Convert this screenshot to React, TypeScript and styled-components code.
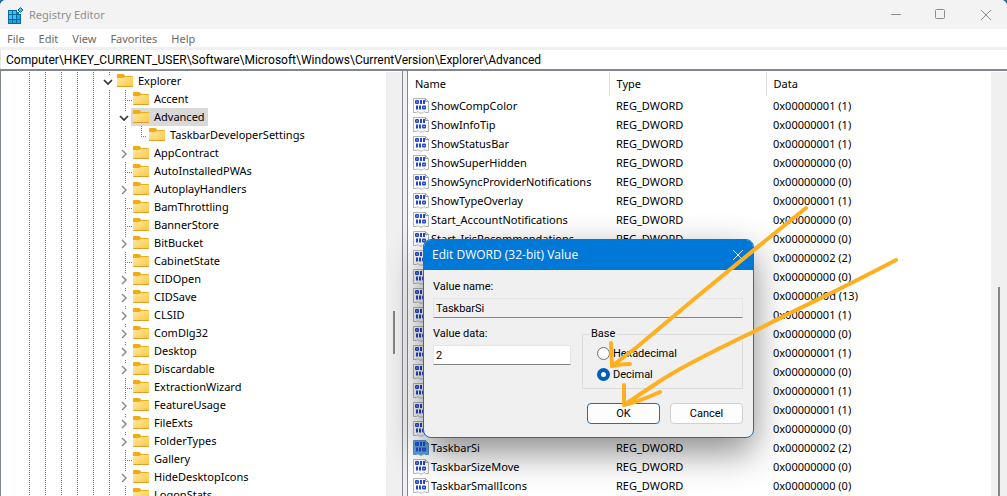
import React, { useState } from 'react';
import styled, { createGlobalStyle, css } from 'styled-components';

const GlobalStyle = createGlobalStyle`
  * { box-sizing: border-box; }
  html, body { margin: 0; padding: 0; background: #2c6a97; }
  body, button, input, table { font-family: "Noto Sans", "Open Sans", sans-serif; font-size: 11px; line-height: 18px; color: #000; }
`;

const line = '#82868f';
const dots = '#7b7b7b';

const Window = styled.main`
  position: relative;
  display: flex;
  flex-direction: column;
  height: 100vh;
  background: #fff;
  border-radius: 6px 6px 0 0;
  overflow: hidden;
`;

const TitleBar = styled.header`
  display: flex;
  align-items: center;
  height: 29px;
  flex: none;
  padding-left: 7px;
  background: #f3f3f3;
`;

const Title = styled.h1`
  flex: 1;
  margin: 0 0 0 4px;
  font-size: 11px;
  font-weight: 400;
  color: #8f8f8f;
`;

const Controls = styled.div`
  display: flex;
  gap: 3px;
`;

const ControlButton = styled.button`
  display: flex;
  align-items: center;
  justify-content: center;
  width: 42px;
  height: 26px;
  padding: 0;
  border: 0;
  background: transparent;
`;

const MenuBar = styled.nav`
  display: flex;
  gap: 14px;
  flex: none;
  height: 18px;
  padding-left: 7px;
`;

const MenuItem = styled.button`
  padding: 0;
  border: 0;
  background: transparent;
  line-height: 20px;
  color: #6a6a6a;
`;

const AddressBar = styled.div`
  flex: none;
  border-top: 3px solid #f0f0f0;
  border-bottom: 2px solid ${line};
`;

const AddressInput = styled.input`
  display: block;
  width: 100%;
  height: 19px;
  padding: 0 5px;
  border: 0;
  border-left: 1px solid #e3e3e3;
  outline: 0;
  background: #fff;
  font-family: Roboto, "Noto Sans", sans-serif;
  font-size: 12px;
`;

const Panes = styled.div`
  display: flex;
  flex: 1;
  min-height: 0;
`;

const TreePane = styled.section`
  display: flex;
  flex: none;
  width: 403px;
  padding-top: 1px;
  border-left: 1px solid ${line};
  border-right: 1px solid ${line};
  overflow: hidden;
`;

const Tree = styled.ul`
  flex: 1;
  margin: 0;
  padding: 0 0 0 20px;
  list-style: none;
`;

const TreeRow = styled.li`
  display: flex;
  height: 18px;
`;

const verticalDots = `repeating-linear-gradient(to bottom, ${dots} 0 1px, transparent 1px 2px)`;
const horizontalDots = `repeating-linear-gradient(to right, ${dots} 0 1px, transparent 1px 2px)`;

const Guide = styled.span<{ $kind: 'line' | 'leaf' | 'last' | 'toggle' }>`
  display: flex;
  align-items: center;
  flex: none;
  width: 16px;
  height: 18px;
  background-repeat: no-repeat;
  ${({ $kind }) =>
    $kind === 'line' &&
    css`background-image: ${verticalDots}; background-size: 1px 18px; background-position: 8px 0;`}
  ${({ $kind }) =>
    $kind === 'leaf' &&
    css`
      background-image: ${verticalDots}, ${horizontalDots};
      background-size: 1px 18px, 6px 1px;
      background-position: 8px 0, 10px 10px;
    `}
  ${({ $kind }) =>
    $kind === 'last' &&
    css`
      background-image: ${verticalDots}, ${horizontalDots};
      background-size: 1px 10px, 6px 1px;
      background-position: 8px 0, 8px 10px;
    `}
  ${({ $kind }) =>
    $kind === 'toggle' &&
    css`background-image: ${verticalDots}; background-size: 1px 3px; background-position: 8px 0;`}
`;

const Toggle = styled.button`
  display: flex;
  align-items: center;
  justify-content: center;
  width: 14px;
  height: 18px;
  padding: 2px 0 0;
  border: 0;
  background: transparent;
`;

const NodeLabel = styled.span<{ $selected?: boolean }>`
  display: flex;
  align-items: center;
  gap: 5px;
  margin-left: -2px;
  padding: 0 3px 0 2px;
  border-radius: 1px;
  background: ${({ $selected }) => ($selected ? '#d9d9d9' : 'transparent')};
  line-height: 18px;
  white-space: nowrap;
`;

const ScrollTrack = styled.div`
  display: flex;
  justify-content: center;
  flex: none;
  width: 16px;
  background: #f0f0f0;
`;

const ScrollThumb = styled.div<{ $top: number; $length?: number }>`
  width: 2px;
  margin-top: ${({ $top }) => $top}px;
  background: #868686;
  ${({ $length }) => ($length ? `height: ${$length}px;` : '')}
`;

const Splitter = styled.div`
  flex: none;
  width: 4px;
  background: #f0f0f0;
`;

const ListPane = styled.section`
  display: flex;
  flex: 1;
  min-width: 0;
  padding-top: 1px;
  border-left: 1px solid ${line};
  overflow: hidden;
`;

const ListScroll = styled.div`
  flex: 1;
  min-width: 0;
`;

const ValueTable = styled.table`
  width: 100%;
  table-layout: fixed;
  border-collapse: collapse;
`;

const HeaderCell = styled.th<{ $width?: number }>`
  height: 24px;
  padding: 0 7px;
  font-weight: 400;
  text-align: left;
  border-right: ${({ $width }) => ($width ? '1px solid #e2e2e2' : '0')};
  ${({ $width }) => ($width ? `width: ${$width}px;` : '')}
`;

const Cell = styled.td`
  height: 19px;
  padding: 0 0 0 7px;
  line-height: 19px;
  white-space: nowrap;
`;

const NameCell = styled(Cell)`
  padding-left: 5px;
`;

const NameContent = styled.span`
  display: flex;
  align-items: center;
  gap: 2px;
  height: 19px;
`;

const Dialog = styled.form`
  position: absolute;
  left: 423px;
  top: 239px;
  width: 331px;
  border: 1px solid #0f74c6;
  border-radius: 8px;
  background: #f0f0f0;
  box-shadow: 0 14px 36px rgba(0, 0, 0, 0.46);
  label, input, legend, button { font-family: Roboto, "Open Sans", sans-serif; font-size: 11px; }
`;

const DialogHeader = styled.div`
  display: flex;
  align-items: center;
  justify-content: space-between;
  height: 30px;
  padding: 0 9px 0 8px;
  border-radius: 7px 7px 0 0;
  background: #0078d7;
  color: #fff;
`;

const DialogTitle = styled.h2`
  margin: 0;
  font-family: "Open Sans", sans-serif;
  font-size: 12px;
  font-weight: 400;
`;

const DialogClose = styled.button`
  display: flex;
  padding: 0;
  border: 0;
  background: transparent;
`;

const DialogBody = styled.div`
  display: flex;
  flex-direction: column;
  padding: 8px 10px 13px 9px;
`;

const FieldLabel = styled.label`
  display: block;
  height: 20px;
`;

const TextField = styled.input`
  display: block;
  width: 100%;
  height: 20px;
  padding: 0 2px;
  border: 1px solid #e5e5e5;
  border-bottom-color: #858585;
  outline: 0;
  background: #fff;
  &:read-only { background: #f0f0f0; }
`;

const DataRow = styled.div`
  display: flex;
  justify-content: space-between;
  margin-top: 7px;
`;

const DataField = styled.div`
  width: 138px;
`;

const BaseGroup = styled.fieldset`
  display: flex;
  flex-direction: column;
  width: 161px;
  height: 64px;
  margin: 0;
  padding: 0 0 0 14px;
  border: 1px solid #dcdcdc;
`;

const Legend = styled.legend`
  margin-left: -8px;
  padding: 0 2px;
`;

const RadioLabel = styled.label`
  display: flex;
  align-items: center;
  gap: 3px;
  height: 21px;
`;

const Radio = styled.input`
  appearance: none;
  width: 13px;
  height: 13px;
  margin: 0;
  border: 1px solid #707070;
  border-radius: 50%;
  background: #fdfdfd;
  &:checked { border: 4px solid #005fb8; background: #fff; }
`;

const Actions = styled.div`
  display: flex;
  justify-content: flex-end;
  gap: 10px;
  margin-top: 14px;
`;

const DialogButton = styled.button<{ $primary?: boolean }>`
  width: 73px;
  height: 21px;
  padding: 0;
  border: 1px solid ${({ $primary }) => ($primary ? '#0f74c6' : '#d0d0d0')};
  border-radius: 4px;
  background: #fdfdfd;
`;

const Annotation = styled.svg`
  position: absolute;
  left: 600px;
  top: 200px;
  pointer-events: none;
`;

const RegistryIcon = () => (
  <svg width="18" height="18" viewBox="0 0 18 18" aria-hidden="true">
    <path d="M1 4h13v14H1z" fill="#0b6a9f" />
    <path d="M2 5h3v3H2zM6 5h3v3H6zM2 9h3v4H2zM6 9h3v4H6z" fill="#3fc3f5" />
    <path d="M2 14h3v3H2zM6 14h3v3H6zM10 9h3v4h-3zM10 14h3v3h-3z" fill="#22a3e0" />
    <path d="M10 2h5v6h-5z" fill="#f3f3f3" />
    <path d="M10 6h2v2h-2z" fill="#1481bd" />
    <path d="M13.500 1.500l2.500 2.500-2.500 2.500-2.500-2.500z" fill="#3fbdf0" stroke="#0b6a9f" />
  </svg>
);

const FolderIcon = () => (
  <svg width="16" height="16" viewBox="0 0 16 16" aria-hidden="true">
    <defs>
      <linearGradient id="folder" x1="0" y1="0" x2="1" y2="1">
        <stop offset="0" stopColor="#ffe9a6" />
        <stop offset="1" stopColor="#fcc73e" />
      </linearGradient>
    </defs>
    <path d="M0 2q0-1 1-1h5q1 0 1.500 1l.5 1h7q1 0 1 1v3H0z" fill="#f3ab14" />
    <path d="M0 5h6l2-1h8v9q0 1-1 1H1q-1 0-1-1z" fill="url(#folder)" />
    <path d="M0 13h16q0 1-1 1H1q-1 0-1-1z" fill="#dfa02a" />
  </svg>
);

const Chevron = ({ open }: { open?: boolean }) => (
  <svg width="10" height="10" viewBox="0 0 10 10" fill="none" aria-hidden="true">
    {open ? (
      <path d="M1 3l4 4 4-4" stroke="#333" strokeWidth="1.700" />
    ) : (
      <path d="M3 1l4 4-4 4" stroke="#8c8c8c" strokeWidth="1.500" />
    )}
  </svg>
);

const BinaryIcon = ({ selected }: { selected?: boolean }) => (
  <svg width="16" height="17" viewBox="0 0 16 17" aria-hidden="true">
    <path
      d="M.5 1.500h12l3 3v11h-3l-1.500-1-1.500 1.500h-3L5 14.500l-1.500 1H.5z"
      fill={selected ? '#5ba3d9' : '#fcfcfc'}
      stroke={selected ? '#4c94cc' : '#b4b4b4'}
    />
    <path d="M12.500 1.500v3h3" fill="none" stroke={selected ? '#4c94cc' : '#999'} />
    <g fill="none" stroke="#2446cf" strokeWidth="1.500">
      <rect x="2.750" y="3.750" width="2.500" height="2.500" rx=".5" />
      <rect x="9.750" y="9.250" width="2.500" height="2.500" rx=".5" />
      <path d="M8 3v4M11 3v4M4 8.500v4M7 8.500v4" strokeWidth="2" />
    </g>
  </svg>
);

const CrossIcon = ({ color }: { color: string }) => (
  <svg width="12" height="12" viewBox="0 0 12 12" fill="none" aria-hidden="true">
    <path d="M1 1l10 10M11 1L1 11" stroke={color} />
  </svg>
);

type Node = { name: string; kind: 'open' | 'closed' | 'leaf' | 'last'; depth?: number; selected?: boolean };

const nodes: Node[] = [
  { name: 'Explorer', kind: 'open', depth: 5 },
  { name: 'Accent', kind: 'leaf' },
  { name: 'Advanced', kind: 'open', selected: true },
  { name: 'TaskbarDeveloperSettings', kind: 'last', depth: 7 },
  { name: 'AppContract', kind: 'closed' },
  { name: 'AutoInstalledPWAs', kind: 'leaf' },
  { name: 'AutoplayHandlers', kind: 'closed' },
  { name: 'BamThrottling', kind: 'leaf' },
  { name: 'BannerStore', kind: 'leaf' },
  { name: 'BitBucket', kind: 'closed' },
  { name: 'CabinetState', kind: 'leaf' },
  { name: 'CIDOpen', kind: 'closed' },
  { name: 'CIDSave', kind: 'closed' },
  { name: 'CLSID', kind: 'closed' },
  { name: 'ComDlg32', kind: 'closed' },
  { name: 'Desktop', kind: 'closed' },
  { name: 'Discardable', kind: 'closed' },
  { name: 'ExtractionWizard', kind: 'leaf' },
  { name: 'FeatureUsage', kind: 'closed' },
  { name: 'FileExts', kind: 'closed' },
  { name: 'FolderTypes', kind: 'closed' },
  { name: 'Gallery', kind: 'leaf' },
  { name: 'HideDesktopIcons', kind: 'closed' },
  { name: 'LogonStats', kind: 'leaf' },
];

const values: [string, string][] = [
  ['ShowCompColor', '0x00000001 (1)'],
  ['ShowInfoTip', '0x00000001 (1)'],
  ['ShowStatusBar', '0x00000001 (1)'],
  ['ShowSuperHidden', '0x00000000 (0)'],
  ['ShowSyncProviderNotifications', '0x00000000 (0)'],
  ['ShowTypeOverlay', '0x00000001 (1)'],
  ['Start_AccountNotifications', '0x00000000 (0)'],
  ['Start_IrisRecommendations', '0x00000000 (0)'],
  ['', '0x00000002 (2)'],
  ['', '0x00000000 (0)'],
  ['', '0x0000000d (13)'],
  ['', '0x00000001 (1)'],
  ['', '0x00000000 (0)'],
  ['', '0x00000001 (1)'],
  ['', '0x00000000 (0)'],
  ['', '0x00000001 (1)'],
  ['', '0x00000001 (1)'],
  ['', '0x00000000 (0)'],
  ['TaskbarSi', '0x00000002 (2)'],
  ['TaskbarSizeMove', '0x00000000 (0)'],
  ['TaskbarSmallIcons', '0x00000000 (0)'],
];

const TreeNode = ({ name, kind, depth = 6, selected }: Node) => (
  <TreeRow>
    {Array.from({ length: depth }, (_, i) => (
      <Guide key={i} $kind="line" />
    ))}
    {kind === 'leaf' || kind === 'last' ? (
      <Guide $kind={kind} />
    ) : (
      <Guide $kind="toggle">
        <Toggle type="button" aria-label={`${kind === 'open' ? 'Collapse' : 'Expand'} ${name}`}>
          <Chevron open={kind === 'open'} />
        </Toggle>
      </Guide>
    )}
    <NodeLabel $selected={selected}>
      <FolderIcon />
      {name}
    </NodeLabel>
  </TreeRow>
);

const EditDialog = () => {
  const [data, setData] = useState('2');
  const [base, setBase] = useState('Decimal');
  return (
    <Dialog role="dialog" aria-labelledby="dialog-title" onSubmit={(e) => e.preventDefault()}>
      <DialogHeader>
        <DialogTitle id="dialog-title">Edit DWORD (32-bit) Value</DialogTitle>
        <DialogClose type="button" aria-label="Close dialog">
          <CrossIcon color="#fff" />
        </DialogClose>
      </DialogHeader>
      <DialogBody>
        <FieldLabel htmlFor="value-name">Value name:</FieldLabel>
        <TextField id="value-name" value="TaskbarSi" readOnly />
        <DataRow>
          <DataField>
            <FieldLabel htmlFor="value-data">Value data:</FieldLabel>
            <TextField id="value-data" value={data} onChange={(e) => setData(e.target.value)} />
          </DataField>
          <BaseGroup>
            <Legend>Base</Legend>
            {['Hexadecimal', 'Decimal'].map((option) => (
              <RadioLabel key={option}>
                <Radio type="radio" name="base" checked={base === option} onChange={() => setBase(option)} />
                {option}
              </RadioLabel>
            ))}
          </BaseGroup>
        </DataRow>
        <Actions>
          <DialogButton type="submit" $primary>OK</DialogButton>
          <DialogButton type="button">Cancel</DialogButton>
        </Actions>
      </DialogBody>
    </Dialog>
  );
};

export default function App() {
  return (
    <>
      <GlobalStyle />
      <Window>
        <TitleBar>
          <RegistryIcon />
          <Title>Registry Editor</Title>
          <Controls>
            <ControlButton aria-label="Minimize">
              <svg width="12" height="12"><path d="M1 5.500h10" stroke="#8c8c8c" /></svg>
            </ControlButton>
            <ControlButton aria-label="Maximize">
              <svg width="12" height="12"><rect x=".5" y=".5" width="9" height="9" rx="1" fill="none" stroke="#8c8c8c" /></svg>
            </ControlButton>
            <ControlButton aria-label="Close"><CrossIcon color="#8c8c8c" /></ControlButton>
          </Controls>
        </TitleBar>
        <MenuBar>
          {['File', 'Edit', 'View', 'Favorites', 'Help'].map((item) => (
            <MenuItem key={item}>{item}</MenuItem>
          ))}
        </MenuBar>
        <AddressBar>
          <AddressInput
            aria-label="Registry path"
            defaultValue={'Computer\\HKEY_CURRENT_USER\\Software\\Microsoft\\Windows\\CurrentVersion\\Explorer\\Advanced'}
          />
        </AddressBar>
        <Panes>
          <TreePane>
            <Tree>
              {nodes.map((node) => (
                <TreeNode key={node.name} {...node} />
              ))}
            </Tree>
            <ScrollTrack><ScrollThumb $top={239} $length={43} /></ScrollTrack>
          </TreePane>
          <Splitter />
          <ListPane>
            <ListScroll>
              <ValueTable>
                <thead>
                  <tr>
                    <HeaderCell $width={201}>Name</HeaderCell>
                    <HeaderCell $width={157}>Type</HeaderCell>
                    <HeaderCell>Data</HeaderCell>
                  </tr>
                </thead>
                <tbody>
                  {values.map(([name, data], i) => (
                    <tr key={i}>
                      <NameCell>
                        <NameContent>
                          <BinaryIcon selected={name === 'TaskbarSi'} />
                          {name}
                        </NameContent>
                      </NameCell>
                      <Cell>REG_DWORD</Cell>
                      <Cell>{data}</Cell>
                    </tr>
                  ))}
                </tbody>
              </ValueTable>
            </ListScroll>
            <ScrollTrack><ScrollThumb $top={215} /></ScrollTrack>
          </ListPane>
        </Panes>
        <EditDialog />
        <Annotation width="300" height="210" viewBox="0 0 300 210" fill="none" stroke="#ffb020" strokeWidth="4" strokeLinecap="round" strokeLinejoin="round" aria-hidden="true">
          <path d="M206 8Q150 53 93 100L37 147L12 166M11 143l1 23q8-2 18-2" />
          <path d="M296 60C230 95 200 107 153 132Q80 167 57 183L24 205M24 185v20q14-3 36-13" />
        </Annotation>
      </Window>
    </>
  );
}
